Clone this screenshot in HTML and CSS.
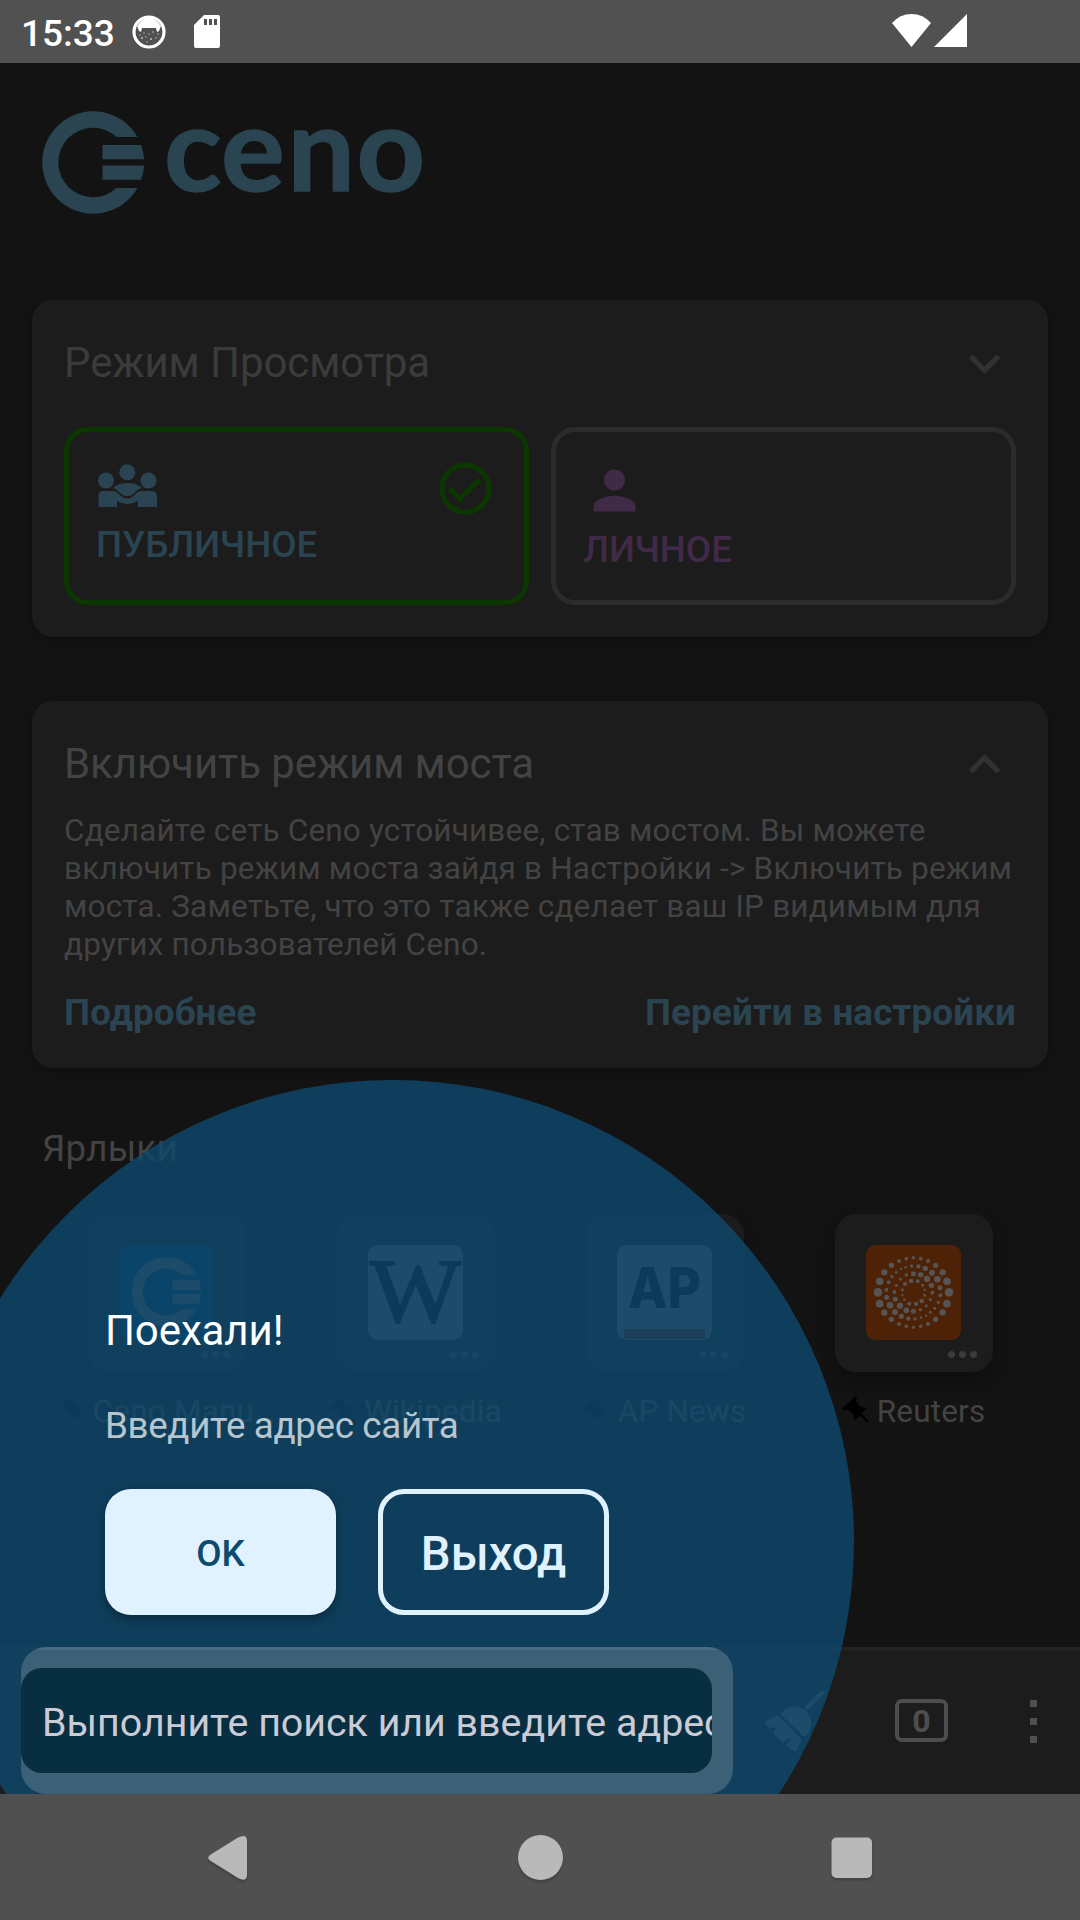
FILE: index.html
```html
<!DOCTYPE html>
<html lang="ru">
<head>
<meta charset="utf-8">
<title>Ceno</title>
<link rel="stylesheet" href="styles.css">
</head>
<body>
<div class="screen">
  <header class="status">
    <span class="time">15:33</span>
    <svg class="bug" viewBox="0 0 34 34"><circle cx="17" cy="17" r="15" fill="none" stroke="#fff" stroke-width="3.2"/><path d="M5 11Q17-6 29 11L27 16L25 17L24 13Q17 13 10 13L9 17L7 16Z" fill="#fff"/><g fill="#c8c8c8"><circle cx="8" cy="20" r=".7"/><circle cx="12" cy="18" r=".7"/><circle cx="17" cy="19" r=".7"/><circle cx="21" cy="17" r=".8"/><circle cx="26" cy="19" r=".7"/><circle cx="10" cy="23" r="1"/><circle cx="14" cy="22" r=".7"/><circle cx="19" cy="24" r="1"/><circle cx="24" cy="23" r=".7"/><circle cx="15" cy="27" r=".7"/></g></svg>
    <svg class="sd" viewBox="0 0 26 33"><path fill="#fff" d="M10 0H24Q26 0 26 2V31Q26 33 24 33H2Q0 33 0 31V10Z"/><path fill="#515151" d="M10 4h3v6h-3zM15 4h3v6h-3zM20 4h3v6h-3z"/></svg>
    <span class="grow"></span>
    <svg class="wifi" viewBox="0 0 39 33"><path fill="#fff" d="M0 9Q8 0 19.5 0T39 9L19.5 33Z"/></svg>
    <svg class="signal" viewBox="0 0 33 33"><path fill="#fff" d="M33 0V33H0Z"/></svg>
  </header>

  <main class="home">
    <div class="brand">
      <svg class="brand-mark" viewBox="0 0 103 103"><path class="blue" d="M95.5 26A51 51.3 0 1 0 95.5 77H74.5A34.7 34.7 0 1 1 74.5 26ZM60.5 34H99Q101.500 41 102.200 48.300H60.500ZM60.500 54.500H102.200Q101.500 62 99 68.700H60.500Z"/></svg>
      <svg class="brand-word" viewBox="0 0 290 104"><g transform="scale(1.03 1)"><text class="blue" x="-1 54.500 119 186" y="80">ceno</text></g></svg>
    </div>

    <section class="card modes">
      <div class="card-head"><h2>Режим Просмотра</h2><svg class="chevron" viewBox="0 0 24 24"><path d="M7.410 8.590L12 13.170l4.590-4.580L18 10l-6 6-6-6z"/></svg></div>
      <div class="mode-row">
        <div class="mode public">
          <svg class="group-icon" viewBox="0 0 63 58"><g><circle cx="10" cy="21.500" r="8"/><circle cx="31.300" cy="13.300" r="8"/><circle cx="52.500" cy="21.500" r="8"/><path d="M2.500 48V37Q2.500 32 7.500 32H18Q20.500 32 22.500 34.500Q26.500 39.500 31.300 39.500T40 34.500Q42 32 44.500 32H55Q61 32 61 37V48H42V42Q31.300 48 21 42V48Z"/><path d="M17 29Q22 24 31.300 24T46 29Q42 29.500 40 32.500Q36 37 31.300 37T22.500 32.500Q20 29.500 17 29Z"/></g></svg>
          <span>ПУБЛИЧНОЕ</span>
          <svg class="check" viewBox="0 0 53 53"><circle cx="26.500" cy="26.500" r="23.500"/><path d="M10.500 26L21 37L40.500 17.500"/></svg>
        </div>
        <div class="mode private">
          <svg class="person-icon" viewBox="0 0 24 24"><path d="M12 12c2.210 0 4-1.790 4-4s-1.790-4-4-4-4 1.790-4 4 1.790 4 4 4zm0 2c-2.670 0-8 1.340-8 4v2h16v-2c0-2.660-5.330-4-8-4z"/></svg>
          <span>ЛИЧНОЕ</span>
        </div>
      </div>
    </section>

    <section class="card bridge">
      <div class="card-head"><h2>Включить режим моста</h2><svg class="chevron" viewBox="0 0 24 24"><path d="M12 8l-6 6 1.410 1.410L12 10.830l4.590 4.580L18 14z"/></svg></div>
      <p>Сделайте сеть Ceno устойчивее, став мостом. Вы можете<br>включить режим моста зайдя в Настройки -&gt; Включить режим<br>моста. Заметьте, что это также сделает ваш IP видимым для<br>других пользователей Ceno.</p>
      <div class="links"><a>Подробнее</a><a>Перейти в настройки</a></div>
    </section>

    <h3>Ярлыки</h3>
    <svg class="defs"><symbol id="pin" viewBox="0 0 27 27"><path d="M13 0.600Q14.500 0 15 1.800L13.800 4.800L18.500 11Q23 11 24.300 12.800L19.800 17.500L26.300 24.500Q27 26.500 25 26.600L17.800 19.500L13.500 24Q11 23 11 18L5 13.600L1.800 14.800Q0 14 0.600 12.500Z"/></symbol></svg>
    <div class="shortcuts">
      <div class="shortcut">
        <div class="tile">
          <svg class="favicon" viewBox="0 0 95 95"><rect width="95" height="95" rx="10" fill="#043155"/><path fill="#555" transform="translate(12.500 12) scale(.68)" d="M95.500 26A51 51.300 0 1 0 95.500 77H74.500A34.700 34.700 0 1 1 74.500 26ZM60.500 34H99Q101.500 41 102.200 48.300H60.500ZM60.500 54.500H102.200Q101.500 62 99 68.700H60.500Z"/></svg>
          <i class="more"></i>
        </div>
        <div class="label"><svg><use href="#pin"/></svg><span>Ceno Manu…</span></div>
      </div>
      <div class="shortcut">
        <div class="tile">
          <svg class="favicon" viewBox="0 0 95 95"><rect width="95" height="95" rx="10" fill="#555"/><text class="wiki" x="2" y="77" textLength="91" lengthAdjust="spacingAndGlyphs">W</text></svg>
          <i class="more"></i>
        </div>
        <div class="label"><svg><use href="#pin"/></svg><span>Wikipedia</span></div>
      </div>
      <div class="shortcut">
        <div class="tile">
          <svg class="favicon" viewBox="0 0 95 95"><rect width="95" height="95" rx="10" fill="#555"/><text class="ap" x="11" y="63" textLength="73" lengthAdjust="spacingAndGlyphs">AP</text><rect x="7" y="84" width="81" height="10" fill="#55110f"/></svg>
          <i class="more"></i>
        </div>
        <div class="label"><svg><use href="#pin"/></svg><span>AP News</span></div>
      </div>
      <div class="shortcut">
        <div class="tile">
          <svg class="favicon" viewBox="93 15 285 285"><rect x="93" y="15" width="285" height="285" rx="28" fill="#4e2206"/><g fill="#555">
            <circle cx="235" cy="53" r="5"/><circle cx="257" cy="56" r="5.500"/><circle cx="279" cy="63" r="6"/><circle cx="302" cy="76" r="8"/><circle cx="323" cy="97" r="9.500"/><circle cx="336" cy="124" r="11.500"/><circle cx="342" cy="157" r="13"/><circle cx="336" cy="191" r="11.500"/><circle cx="323" cy="217" r="9.500"/><circle cx="302" cy="238" r="8"/><circle cx="279" cy="252" r="6"/><circle cx="257" cy="259" r="5.500"/><circle cx="235" cy="262" r="5"/><circle cx="214" cy="259" r="5.500"/><circle cx="192" cy="252" r="6"/><circle cx="169" cy="238" r="8"/><circle cx="148" cy="218" r="9.500"/><circle cx="134" cy="191" r="11.500"/><circle cx="129" cy="157" r="13"/><circle cx="134" cy="124" r="11.500"/><circle cx="148" cy="97" r="9.500"/><circle cx="169" cy="76" r="8"/><circle cx="192" cy="63" r="6"/><circle cx="214" cy="56" r="5.500"/>
            <circle cx="230" cy="78" r="5"/><circle cx="250" cy="79" r="6.500"/><circle cx="271" cy="85" r="8"/><circle cx="291" cy="98" r="9"/><circle cx="307" cy="118" r="10"/><circle cx="315" cy="143" r="7.500"/><circle cx="316" cy="166" r="6"/><circle cx="310" cy="187" r="5"/><circle cx="299" cy="205" r="4.500"/><circle cx="286" cy="217" r="4.500"/><circle cx="273" cy="227" r="3.500"/><circle cx="258" cy="233" r="4"/><circle cx="240" cy="237" r="5"/><circle cx="220" cy="236" r="6.500"/><circle cx="199" cy="229" r="8"/><circle cx="180" cy="216" r="9"/><circle cx="165" cy="196" r="10"/><circle cx="155" cy="172" r="7.500"/><circle cx="154" cy="149" r="6"/><circle cx="161" cy="127" r="6"/><circle cx="171" cy="110" r="5"/><circle cx="184" cy="97" r="4.500"/><circle cx="198" cy="87" r="3.500"/><circle cx="212" cy="82" r="4"/>
            <circle cx="235" cy="101" r="7.500"/><circle cx="257" cy="104" r="8"/><circle cx="276" cy="117" r="9.500"/><circle cx="289" cy="136" r="8"/><circle cx="292" cy="158" r="6"/><circle cx="286" cy="179" r="5"/><circle cx="274" cy="197" r="4.500"/><circle cx="256" cy="209" r="5"/><circle cx="235" cy="214" r="7.500"/><circle cx="214" cy="211" r="8.500"/><circle cx="195" cy="197" r="9.500"/><circle cx="181" cy="178" r="7.500"/><circle cx="178" cy="156" r="6"/><circle cx="184" cy="136" r="5"/><circle cx="196" cy="118" r="4.500"/><circle cx="214" cy="105" r="5.500"/>
            <circle cx="248" cy="124" r="6"/><circle cx="263" cy="136" r="4.500"/><circle cx="269" cy="150" r="3.500"/><circle cx="269" cy="166" r="4.500"/><circle cx="260" cy="183" r="7"/><circle cx="243" cy="192" r="6.500"/><circle cx="223" cy="191" r="6"/><circle cx="208" cy="179" r="4"/><circle cx="202" cy="165" r="3.500"/><circle cx="202" cy="149" r="4.500"/><circle cx="210" cy="132" r="6"/><circle cx="228" cy="123" r="7"/>
          </g></svg>
          <i class="more"></i>
        </div>
        <div class="label"><svg><use href="#pin"/></svg><span>Reuters</span></div>
      </div>
    </div>
    <div class="prompt-circle"></div>
  </main>

  <div class="toolbar">
    <svg class="broom" viewBox="0 0 61 61"><path d="M42 16.500L57.500 1.500" fill="none" stroke="#555" stroke-width="4.500" stroke-linecap="round"/><path fill="#555" d="M16 22Q24 13 34 16T46 31Q47 39 41 45Q39 46 37 44L16 24ZM1 30L13 24L37 49L31 60Q29 61 27 59L21 54L26 47Q21 48 18 52L8 42L12 36Q7 36 5 38L1 34Q-1 32 1 30Z"/></svg>
    <div class="tabs">0</div>
    <div class="menu"><i></i><i></i><i></i></div>
    <div class="prompt-circle"></div>
    <div class="focal"><div class="url">Выполните поиск или введите адрес</div></div>
  </div>

  <footer class="nav">
    <svg viewBox="0 0 1080 126"><path class="shade" d="M210 61L238 43.500Q247 39 247 47V80Q247 89 238 84L210 66.500Q206.500 64 210 61Z"/><circle class="shade" cx="540.500" cy="63.500" r="22.500"/><rect class="shade" x="831.500" y="43.500" width="40.500" height="40.500" rx="5"/></svg>
  </footer>

  <div class="prompt">
    <h1>Поехали!</h1>
    <p>Введите адрес сайта</p>
    <div class="actions"><button class="ok">OK</button><button class="exit">Выход</button></div>
  </div>
</div>
</body>
</html>
```
FILE: styles.css
```css
* { box-sizing: border-box; margin: 0; padding: 0; }
body { background: #131313; font-family: Roboto, "Liberation Sans", sans-serif; }
svg { display: block; flex: none; }
.screen { width: 1080px; height: 1920px; display: flex; flex-direction: column; position: relative; overflow: hidden; }

.status { height: 63px; background: #515151; display: flex; align-items: flex-start; padding: 14px 113px 0 21px; }
.time { color: #fff; font-size: 37px; line-height: 39px; font-weight: 500; width: 111px; }
.bug { width: 34px; height: 34px; margin-top: 1px; }
.sd { width: 26px; height: 33px; margin: 1px 0 0 28px; }
.grow { flex: 1; }
.wifi { width: 39px; height: 33px; margin-right: 3px; }
.signal { width: 33px; height: 33px; }

.home { height: 1584px; padding: 48px 32px 0; position: relative; overflow: hidden; }
.blue { fill: #2a4452; }
.brand { display: flex; height: 104px; padding-left: 9.5px; margin-bottom: 85px; }
.brand-mark { width: 103px; height: 103px; }
.brand-word { width: 290px; height: 104px; margin-left: 20px; overflow: visible; }
.brand-word text { font: 700 116px Lato, sans-serif; stroke: #2a4452; stroke-width: 1.5px; }

.card { background: #1c1c1c; border-radius: 21px; padding: 32px; box-shadow: 0 2px 6px rgba(0,0,0,.25); }
.card-head { display: flex; align-items: center; justify-content: space-between; height: 63px; }
h2 { font-size: 42px; line-height: 62px; font-weight: 400; color: #3b3b3b; letter-spacing: -.08px; margin-top: -2px; }
.chevron { width: 63px; height: 63px; fill: #323232; }
.modes { height: 337px; margin-bottom: 64px; }
.mode-row { display: grid; grid-template-columns: 1fr 1fr; gap: 22px; margin-top: 32px; }
.mode { height: 178px; border: 5px solid #2b2b2b; border-radius: 24px; padding: 27px; position: relative; font-size: 36.750px; line-height: 43px; font-weight: 500; color: #412a47; }
.public { border-color: #0b3800; color: #2a4452; }
.group-icon { width: 63px; height: 58px; margin-bottom: 6px; fill: #2a4452; }
.person-icon { width: 63px; height: 63px; margin-bottom: 6px; fill: #412a47; }
.check { position: absolute; right: 32px; top: 30px; width: 53px; height: 53px; fill: none; stroke: #0b3800; stroke-width: 5; }

.bridge { height: 367px; margin-bottom: 59px; }
.bridge h2, .bridge p { color: #434343; }
.bridge p { font-size: 31.500px; line-height: 38.100px; margin-top: 16px; white-space: nowrap; letter-spacing: .175px; }
.links { display: flex; justify-content: space-between; margin-top: 27px; font-size: 36.750px; line-height: 43px; font-weight: 700; color: #2a4452; letter-spacing: .17px; }
h3 { font-size: 36.750px; line-height: 43px; font-weight: 400; color: #434343; margin: 0 0 44px 10px; letter-spacing: .2px; }
.defs { width: 0; height: 0; position: absolute; }
.shortcuts { display: grid; grid-template-columns: repeat(4, 249px); margin-left: 10px; }
.shortcut { display: flex; flex-direction: column; align-items: center; }
.tile { width: 158px; height: 158px; border-radius: 21px; background: #1c1c1c; padding-top: 31px; display: flex; flex-direction: column; align-items: center; box-shadow: 0 8px 16px rgba(0,0,0,.3); }
.favicon { width: 95px; height: 95px; }
.more { width: 7px; height: 7px; border-radius: 50%; background: #3b3b3b; box-shadow: 11px 0 #3b3b3b, 22px 0 #3b3b3b; margin: 11px 0 0 76px; }
.label { display: flex; align-items: center; height: 38px; margin-top: 21px; gap: 8px; font-size: 31.500px; line-height: 38px; color: #434343; white-space: nowrap; letter-spacing: .18px; }
.label svg { width: 27px; height: 27px; margin-top: -6px; fill: #000; }
.wiki { font: 90px "Liberation Serif", serif; stroke: #000; stroke-width: 2px; }
.ap { font: 800 57px Inter, sans-serif; }

.prompt-circle { position: absolute; left: -69.500px; top: 1016.500px; width: 923px; height: 923px; border-radius: 50%; background: rgba(14,74,110,.8); }
.toolbar { height: 147px; background: linear-gradient(#232323 3px, #1c1c1c 3px); position: relative; overflow: hidden; display: flex; padding: 3px 0 0 765px; }
.toolbar .prompt-circle { top: -567.500px; }
.broom { width: 61px; height: 61px; margin-top: 41px; }
.tabs { width: 53px; height: 43px; margin: 49px 0 0 69px; border: 4px solid #4d4d4d; border-radius: 7px; color: #4d4d4d; font-size: 32px; line-height: 36px; font-weight: 700; text-align: center; }
.menu { margin: 50px 0 0 82px; display: flex; flex-direction: column; gap: 11px; }
.menu i { width: 7px; height: 7px; background: #4f4f4f; }
.focal { position: absolute; left: 21px; top: 0; width: 712px; height: 147px; border-radius: 25px; padding: 21px 21px 21px 0; background: linear-gradient(#496b82 3px, #3c6075 3px); }
.url { height: 105px; border-radius: 21px; background: #082e42; color: #cbcbd5; font-size: 39.375px; line-height: 110px; padding-left: 21px; overflow: hidden; white-space: nowrap; }

.nav { height: 126px; background: #505050; }
.nav svg { width: 1080px; height: 126px; }
.shade { fill: #b9b9b9; filter: drop-shadow(0 2px 1px rgba(0,0,0,.2)); }

.prompt { position: absolute; left: 105px; top: 1306px; color: #fff; }
.prompt h1 { font-size: 42px; line-height: 50px; font-weight: 400; letter-spacing: -.1px; }
.prompt p { font-size: 36.750px; line-height: 43px; margin-top: 48px; color: #b7c5ce; letter-spacing: -.35px; }
.actions { display: flex; gap: 42px; margin-top: 42px; }
.actions button { width: 231px; height: 126px; border-radius: 26px; border: 0; font-family: inherit; font-weight: 500; padding-top: 2px; }
.ok { background: #e0f2ff; color: #0a4b6e; font-size: 36.750px; box-shadow: 0 4px 10px rgba(0,0,0,.35); }
.actions .exit { background: none; border: 5px solid #e0f2ff; color: #e0f2ff; font-size: 47.250px; padding-top: 4px; }
```
